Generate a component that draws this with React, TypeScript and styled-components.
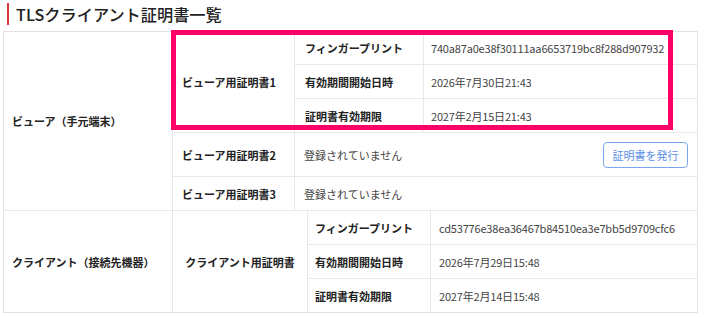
import * as React from 'react';
import styled, { createGlobalStyle } from 'styled-components';

const GlobalStyle = createGlobalStyle`
  body {
    margin: 0;
    background: #fff;
    font-family: "Noto Sans CJK JP", "Noto Sans", sans-serif;
    color: #333;
  }
`;

const Page = styled.div`
  padding: 3px 6px 0 3px;
`;

const Title = styled.h2`
  margin: 0 0 6px 4px;
  padding-left: 7px;
  border-left: 2px solid #d9363e;
  font-size: 16.2px;
  line-height: 22px;
  font-weight: 500;
  color: #222;
`;

const Table = styled.div`
  display: grid;
  gap: 1px;
  background: #e8e8ea;
  border: 1px solid #e2e2e4;
`;

const Section = styled.div<{ $cols: string; $rows: string }>`
  position: relative;
  display: grid;
  grid-template-columns: ${(p) => p.$cols};
  grid-template-rows: ${(p) => p.$rows};
  gap: 1px;
`;

const Cell = styled.div<{ $pad?: number; $rowSpan?: number; $colSpan?: number; $center?: boolean }>`
  background: #fff;
  display: flex;
  align-items: center;
  justify-content: ${(p) => (p.$center ? 'center' : 'flex-start')};
  padding: 0 ${(p) => p.$pad ?? 8}px;
  grid-row: span ${(p) => p.$rowSpan ?? 1};
  grid-column: span ${(p) => p.$colSpan ?? 1};
  font-size: 11px;
  white-space: nowrap;
`;

const Label = styled(Cell)`
  font-weight: 700;
  color: #222;
`;

const Value = styled(Cell)`
  color: #444;
`;

const Code = styled.span`
  letter-spacing: -0.18px;
`;

const Spread = styled(Value)`
  justify-content: space-between;
`;

const IssueButton = styled.button`
  width: 85px;
  height: 26px;
  padding: 0;
  border: 1px solid #7aa6ef;
  border-radius: 4px;
  background: #fff;
  color: #5b8fe6;
  font-family: inherit;
  font-size: 11px;
  cursor: pointer;
`;

const Highlight = styled.div`
  position: absolute;
  left: 167px;
  top: -2px;
  width: 502px;
  height: 100px;
  box-sizing: border-box;
  border: 5px solid #ff0066;
  pointer-events: none;
`;

interface ICertInfo {
  fingerprint: string;
  start: string;
  end: string;
}

const CertRows: React.FunctionComponent<{ cert: ICertInfo; labelPad: number; valuePad: number }> = ({
  cert,
  labelPad,
  valuePad,
}) => (
  <>
    <Label $pad={labelPad}>フィンガープリント</Label>
    <Value $pad={valuePad}>
      <Code>{cert.fingerprint}</Code>
    </Value>
    <Label $pad={labelPad}>有効期間開始日時</Label>
    <Value $pad={valuePad}>
      <Code>{cert.start}</Code>
    </Value>
    <Label $pad={labelPad}>証明書有効期限</Label>
    <Value $pad={valuePad}>
      <Code>{cert.end}</Code>
    </Value>
  </>
);

const viewerCert: ICertInfo = {
  fingerprint: '740a87a0e38f30111aa6653719bc8f288d907932',
  start: '2026年7月30日21:43',
  end: '2027年2月15日21:43',
};

const clientCert: ICertInfo = {
  fingerprint: 'cd53776e38ea36467b84510ea3e7bb5d9709cfc6',
  start: '2026年7月29日15:48',
  end: '2027年2月14日15:48',
};

const App: React.FunctionComponent = () => {
  return (
    <Page>
      <GlobalStyle />
      <Title>TLSクライアント証明書一覧</Title>
      <Table>
        <Section $cols="168px 121px 128px 1fr" $rows="32px 33px 33px 43px 33px">
          <Label $rowSpan={5}>ビューア（手元端末）</Label>
          <Label $rowSpan={3} $pad={9}>ビューア用証明書1</Label>
          <CertRows cert={viewerCert} labelPad={10} valuePad={7} />
          <Label $pad={9}>ビューア用証明書2</Label>
          <Spread $colSpan={2} $pad={9}>
            登録されていません
            <IssueButton>証明書を発行</IssueButton>
          </Spread>
          <Label $pad={9}>ビューア用証明書3</Label>
          <Value $colSpan={2} $pad={9}>登録されていません</Value>
          <Highlight />
        </Section>
        <Section $cols="168px 134px 122px 1fr" $rows="33px 33px 33px">
          <Label $rowSpan={3}>クライアント（接続先機器）</Label>
          <Label $rowSpan={3} $center>クライアント用証明書</Label>
          <CertRows cert={clientCert} labelPad={7} valuePad={8} />
        </Section>
      </Table>
    </Page>
  );
};

export default App;
